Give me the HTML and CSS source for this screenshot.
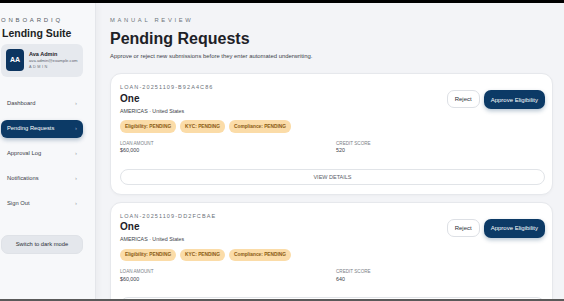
FILE: index.html
```html
<!DOCTYPE html>
<html lang="en">
<head>
  <meta charset="UTF-8">
  <title>OnboardIQ - Pending Requests</title>
  <link rel="stylesheet" href="styles.css">
</head>
<body>
  <div class="topbar"></div>
  <div class="layout">
    <aside class="sidebar">
      <div class="brand-kicker">ONBOARDIQ</div>
      <div class="brand">Lending Suite</div>
      <div class="profile">
        <div class="avatar">AA</div>
        <div class="profile-info">
          <div class="profile-name">Ava Admin</div>
          <div class="profile-mail">ava.admin@example.com</div>
          <div class="profile-role">ADMIN</div>
        </div>
      </div>
      <nav class="nav">
        <a class="nav-item">Dashboard <span class="chev">›</span></a>
        <a class="nav-item active">Pending Requests <span class="chev">›</span></a>
        <a class="nav-item">Approval Log <span class="chev">›</span></a>
        <a class="nav-item">Notifications <span class="chev">›</span></a>
        <a class="nav-item">Sign Out <span class="chev">›</span></a>
      </nav>
      <button class="theme-btn">Switch to dark mode</button>
    </aside>

    <main class="main">
      <div class="kicker">MANUAL REVIEW</div>
      <h1>Pending Requests</h1>
      <p class="subtitle">Approve or reject new submissions before they enter automated underwriting.</p>

      <div class="card">
        <div class="card-head">
          <div>
            <div class="loan-id">LOAN-20251109-B92A4C86</div>
            <div class="loan-name">One</div>
            <div class="loan-region">AMERICAS · United States</div>
          </div>
          <div class="actions">
            <button class="btn-reject">Reject</button>
            <button class="btn-approve">Approve Eligibility</button>
          </div>
        </div>
        <div class="badges">
          <span class="badge">Eligibility: PENDING</span>
          <span class="badge">KYC: PENDING</span>
          <span class="badge">Compliance: PENDING</span>
        </div>
        <div class="stats">
          <div><div class="stat-label">LOAN AMOUNT</div><div class="stat-value">$60,000</div></div>
          <div><div class="stat-label">CREDIT SCORE</div><div class="stat-value">520</div></div>
        </div>
        <button class="btn-details">VIEW DETAILS</button>
      </div>

      <div class="card">
        <div class="card-head">
          <div>
            <div class="loan-id">LOAN-20251109-DD2FCBAE</div>
            <div class="loan-name">One</div>
            <div class="loan-region">AMERICAS · United States</div>
          </div>
          <div class="actions">
            <button class="btn-reject">Reject</button>
            <button class="btn-approve">Approve Eligibility</button>
          </div>
        </div>
        <div class="badges">
          <span class="badge">Eligibility: PENDING</span>
          <span class="badge">KYC: PENDING</span>
          <span class="badge">Compliance: PENDING</span>
        </div>
        <div class="stats">
          <div><div class="stat-label">LOAN AMOUNT</div><div class="stat-value">$60,000</div></div>
          <div><div class="stat-label">CREDIT SCORE</div><div class="stat-value">640</div></div>
        </div>
        <button class="btn-details">VIEW DETAILS</button>
      </div>
    </main>
  </div>
  <div class="bottombar"></div>
</body>
</html>
```

FILE: styles.css
```css
* {
  box-sizing: border-box;
}
html, body {
  margin: 0;
  height: 100%;
  overflow: hidden;
}
body {
  font-family: "Liberation Sans", Arial, sans-serif;
  background: #f3f4f7;
  color: #1d2127;
  line-height: 1.2;
}
.topbar {
  height: 3px;
  background: #000;
}
.bottombar {
  position: fixed;
  left: 0;
  right: 0;
  bottom: 0;
  height: 2px;
  background: #5a5a5a;
}
.layout {
  display: flex;
  height: calc(100% - 3px);
}

/* sidebar */
.sidebar {
  width: 96px;
  flex-shrink: 0;
  background: #f7f8fa;
  border-right: 1px solid #e4e6ea;
  box-shadow: 2px 0 6px rgba(0, 0, 0, 0.04);
  padding: 14px 12px 0 1px;
}
.brand-kicker {
  font-size: 6px;
  letter-spacing: 2.8px;
  color: #555b63;
}
.brand {
  font-size: 10.5px;
  font-weight: 700;
  margin-top: 3px;
  padding-left: 1px;
  color: #1c1f24;
}
.profile {
  display: flex;
  align-items: center;
  gap: 5px;
  background: #e6e9ee;
  border-radius: 6px;
  padding: 5px 4px 5px 5px;
  margin-top: 4px;
  height: 33px;
}
.avatar {
  width: 18px;
  height: 22px;
  border-radius: 4px;
  background: #0d3560;
  color: #fff;
  font-size: 7px;
  font-weight: 700;
  display: flex;
  align-items: center;
  justify-content: center;
  flex-shrink: 0;
}
.profile-name {
  font-size: 5.5px;
  font-weight: 700;
}
.profile-mail {
  font-size: 4.2px;
  color: #5f6670;
  margin-top: 1px;
}
.profile-role {
  font-size: 3.8px;
  letter-spacing: 1.5px;
  color: #6b717a;
  margin-top: 2px;
}
.nav {
  display: flex;
  flex-direction: column;
  gap: 7px;
  margin-top: 18px;
}
.nav-item {
  display: flex;
  justify-content: space-between;
  align-items: center;
  font-size: 5.8px;
  color: #3a4048;
  padding: 0 6px;
  height: 18px;
  border-radius: 6px;
}
.nav-item.active {
  background: #0c3a66;
  color: #fff;
  box-shadow: 0 2px 4px rgba(12, 58, 102, 0.3);
}
.chev {
  font-size: 6px;
  color: #9aa0a8;
}
.nav-item.active .chev {
  color: #9fb3c9;
}
.theme-btn {
  display: block;
  width: 100%;
  margin-top: 22px;
  height: 19px;
  border: 1px solid #dfe2e7;
  border-radius: 7px;
  background: #e4e7ec;
  font-family: inherit;
  font-size: 5.8px;
  color: #2a2f36;
}

/* main */
.main {
  flex: 1;
  padding: 14px 11px 0 14px;
  overflow: hidden;
}
.kicker {
  font-size: 5.8px;
  letter-spacing: 2.7px;
  color: #6e747c;
}
h1 {
  font-size: 16px;
  font-weight: 700;
  margin: 5px 0 0;
  color: #1d2127;
}
.subtitle {
  font-size: 5.9px;
  color: #3c424a;
  margin: 5px 0 0;
}
.card {
  background: #fff;
  border: 1px solid #e6e8ec;
  border-radius: 11px;
  padding: 10px 7px 9px 9px;
  margin-top: 13px;
  box-shadow: 0 1px 3px rgba(0, 0, 0, 0.03);
}
.card + .card {
  margin-top: 7px;
}
.card-head {
  display: flex;
  justify-content: space-between;
  align-items: flex-start;
}
.loan-id {
  font-size: 5.5px;
  letter-spacing: 1.1px;
  color: #6a7078;
}
.loan-name {
  font-size: 10px;
  font-weight: 700;
  margin-top: 2px;
}
.loan-region {
  font-size: 5.3px;
  color: #3b4148;
  margin-top: 3px;
}
.actions {
  display: flex;
  gap: 4px;
  margin-top: 6px;
}
.btn-reject {
  height: 18px;
  padding: 0 7px;
  border: 1px solid #dde0e5;
  border-radius: 7px;
  background: #fff;
  font-family: inherit;
  font-size: 6px;
  color: #2a2f36;
}
.btn-approve {
  height: 19px;
  padding: 0 7px;
  border: none;
  border-radius: 7px;
  background: #0c3a66;
  color: #fff;
  font-family: inherit;
  font-size: 6px;
  box-shadow: 0 2px 4px rgba(12, 58, 102, 0.3);
}
.badges {
  display: flex;
  gap: 4px;
  margin-top: 6px;
}
.badge {
  background: #fbdca8;
  color: #8a5a12;
  font-size: 4.8px;
  font-weight: 700;
  padding: 3.5px 5px;
  border-radius: 6px;
}
.stats {
  display: grid;
  grid-template-columns: 216px 1fr;
  margin-top: 8px;
}
.stat-label {
  font-size: 4.6px;
  color: #7a8088;
}
.stat-value {
  font-size: 5.3px;
  color: #3a4048;
  margin-top: 1px;
}
.btn-details {
  display: block;
  width: 100%;
  height: 16px;
  margin-top: 15px;
  border: 1px solid #e1e4e8;
  border-radius: 8px;
  background: #fff;
  font-family: inherit;
  font-size: 5.5px;
  color: #5a6068;
}
```
